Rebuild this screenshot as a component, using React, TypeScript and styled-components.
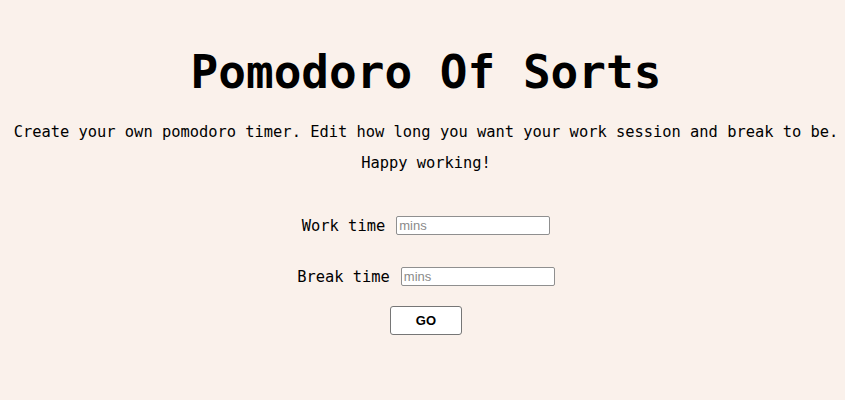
import React, { useState } from 'react'
import styled, { createGlobalStyle } from 'styled-components'

const GlobalStyle = createGlobalStyle`
  html, body {
    margin : 0;
    padding : 0;
    background : #faf1eb;
  }
  body {
    font-family : "DejaVu Sans Mono", "Liberation Mono", monospace;
    color : #000;
  }
`

const Page = styled.div`
  display : flex;
  flex-direction : column;
  align-items : center;
  min-height : 400px;
  padding : 45px 0 0 7px;
  box-sizing : border-box;
`
const Title = styled.h1`
  margin : 0;
  font-size : 46px;
  font-weight : bold;
  line-height : 54px;
`
const Blurb = styled.p`
  margin : 0;
  font-size : 15.4px;
  line-height : 31px;
  white-space : nowrap;
  text-align : center;
`
const Intro = styled.div`
  margin-top : 18px;
  display : flex;
  flex-direction : column;
  align-items : center;
`
const Form = styled.form`
  margin-top : 37px;
  display : flex;
  flex-direction : column;
  align-items : center;
  gap : 32px;
`
const Field = styled.div`
  display : flex;
  align-items : center;
  gap : 11px;
`
const Label = styled.label`
  font-size : 15.4px;
`
const Input = styled.input`
  width : 154px;
  height : 19px;
  box-sizing : border-box;
  padding : 1px 2px;
  border : 1px solid #8f8f8f;
  border-radius : 2px;
  background : #fff;
  font-family : Arial, "Liberation Sans", sans-serif;
  font-size : 13px;
  &::placeholder {
    color : #8a8a8a;
  }
`
const GoButton = styled.button`
  margin-top : -12px;
  width : 72px;
  height : 29px;
  background : #fff;
  border : 1px solid #767676;
  border-radius : 3px;
  font-family : Arial, "Liberation Sans", sans-serif;
  font-weight : bold;
  font-size : 13px;
  color : #000;
`

function App() {
  const [work, setWork] = useState('')
  const [rest, setRest] = useState('')

  return (
    <Page>
      <GlobalStyle />
      <Title>Pomodoro Of Sorts</Title>
      <Intro>
        <Blurb>Create your own pomodoro timer. Edit how long you want your work session and break to be.</Blurb>
        <Blurb>Happy working!</Blurb>
      </Intro>
      <Form onSubmit={(event) => event.preventDefault()}>
        <Field>
          <Label htmlFor="work">Work time</Label>
          <Input id="work" value={work} onChange={(event) => setWork(event.target.value)} placeholder="mins" />
        </Field>
        <Field>
          <Label htmlFor="break">Break time</Label>
          <Input id="break" value={rest} onChange={(event) => setRest(event.target.value)} placeholder="mins" />
        </Field>
        <GoButton type="submit">GO</GoButton>
      </Form>
    </Page>
  )
}

export default App
